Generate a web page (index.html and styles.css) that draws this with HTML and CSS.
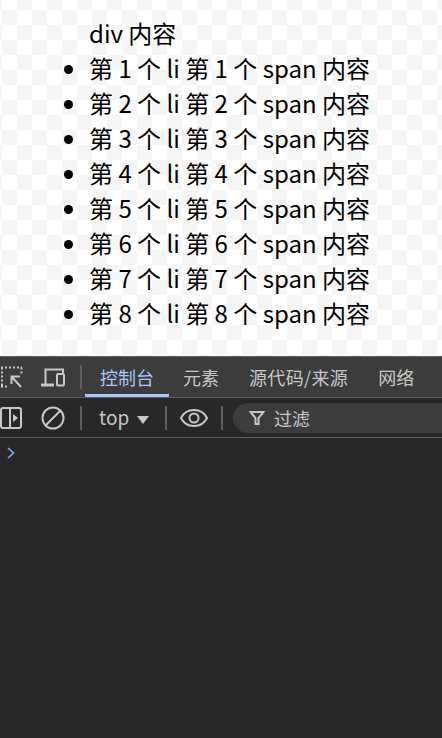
FILE: index.html
```html
<!DOCTYPE html>
<html lang="zh-CN">
<head>
    <meta charset="UTF-8">
    <title>devtools</title>
    <link rel="stylesheet" href="styles.css">
</head>
<body>
    <div class="page">
        <div class="content">
            <div>div 内容</div>
            <ul>
                <li>第 1 个 li 第 1 个 span 内容</li>
                <li>第 2 个 li 第 2 个 span 内容</li>
                <li>第 3 个 li 第 3 个 span 内容</li>
                <li>第 4 个 li 第 4 个 span 内容</li>
                <li>第 5 个 li 第 5 个 span 内容</li>
                <li>第 6 个 li 第 6 个 span 内容</li>
                <li>第 7 个 li 第 7 个 span 内容</li>
                <li>第 8 个 li 第 8 个 span 内容</li>
            </ul>
        </div>
    </div>
    <div class="devtools">
        <div class="tabbar">
            <svg class="icon-inspect" width="24" height="24" viewBox="0 0 24 24" fill="none" stroke="#c7c7c7" stroke-width="2">
                <path d="M1 2.5h21M2 2.5v19M1 21.5h8M21.5 2.5v7" stroke-dasharray="2 2"/>
                <path d="M20 11.5h-8.500v7.500M11.500 11.500L21 22"/>
            </svg>
            <svg class="icon-device" width="24" height="24" viewBox="0 0 24 24" fill="none" stroke="#c7c7c7" stroke-width="2">
                <path d="M4.500 20V4.500H22V8"/>
                <path d="M0 20h13" stroke-width="3"/>
                <rect x="16" y="9" width="7" height="11.500" rx="1"/>
            </svg>
            <span class="divider"></span>
            <div class="tab active">控制台</div>
            <div class="tab first">元素</div>
            <div class="tab wide">源代码/来源</div>
            <div class="tab">网络</div>
        </div>
        <div class="toolbar">
            <svg class="icon-sidebar" width="22" height="22" viewBox="0 0 22 22" fill="none" stroke="#c7c7c7" stroke-width="2">
                <rect x="1" y="1" width="20" height="20" rx="2"/>
                <path d="M10 1v20"/>
                <path d="M13 7l5 4-5 4z" fill="#c7c7c7" stroke="none"/>
            </svg>
            <svg class="icon-clear" width="24" height="24" viewBox="0 0 24 24" fill="none" stroke="#c7c7c7" stroke-width="2">
                <circle cx="12" cy="12" r="10.500"/>
                <path d="M5 19L19 5"/>
            </svg>
            <span class="divider"></span>
            <div class="context"><span class="context-name">top</span><span class="caret"></span></div>
            <span class="divider"></span>
            <svg class="icon-eye" width="28" height="20" viewBox="0 0 28 20" fill="none" stroke="#c7c7c7" stroke-width="2">
                <path d="M1 10C4 4 9 2 14 2s10 2 13 8c-3 6-8 8-13 8S4 16 1 10z"/>
                <circle cx="14" cy="10" r="4.500"/>
            </svg>
            <span class="divider"></span>
            <div class="filter">
                <svg width="16" height="16" viewBox="0 0 16 16" fill="none" stroke="#c7c7c7" stroke-width="2">
                    <path d="M1.500 2h13L9.500 8v6h-3V8z"/>
                </svg>
                <span>过滤</span>
            </div>
        </div>
        <div class="console">
            <svg width="10" height="14" viewBox="0 0 10 14" fill="none" stroke="#7cacf8" stroke-width="1.600">
                <path d="M2 2l5.500 5L2 12"/>
            </svg>
        </div>
    </div>
</body>
</html>
```

FILE: styles.css
```css
* {
    padding: 0;
    margin: 0;
    box-sizing: border-box;
}
html, body {
    height: 100%;
    overflow: hidden;
}
body {
    display: flex;
    flex-direction: column;
    font-family: "Noto Sans CJK SC", sans-serif;
}
.page {
    height: 356px;
    flex: none;
    background-color: #fff;
    background-image: conic-gradient(#f5f5f5 25%, #fff 25% 50%, #f5f5f5 50% 75%, #fff 75%);
    background-size: 30px 30px;
    background-position: 2px -5px;
}
.content {
    padding: 15px 0 0 89px;
    font-size: 24px;
    color: #000;
}
.content ul {
    list-style-type: disc;
}
.devtools {
    flex: 1;
    background-color: #282828;
    border-top: 1px solid #5e5e5e;
    color: #c7c7c7;
    font-size: 18px;
}
.tabbar {
    height: 41px;
    background-color: #3c3c3c;
    border-bottom: 1px solid #5e5e5e;
    display: flex;
    align-items: center;
}
.icon-inspect {
    flex: none;
}
.icon-device {
    margin-left: 17px;
    flex: none;
}
.divider {
    width: 2px;
    height: 24px;
    background-color: #5e5e5e;
    flex: none;
}
.tabbar .divider {
    margin-left: 15px;
}
.tab {
    height: 40px;
    line-height: 40px;
    padding: 0 15px;
    white-space: nowrap;
    flex: none;
}
.tab.active {
    color: #a8c7fa;
    margin-left: 3px;
    box-shadow: inset 0 -3px 0 #a8c7fa;
    border-radius: 0 0 1px 1px;
}
.tab.first {
    padding-left: 14px;
}
.tab.wide {
    letter-spacing: 0.35px;
}
.toolbar {
    height: 40px;
    border-bottom: 1px solid #5e5e5e;
    background-color: #282828;
    display: flex;
    align-items: center;
}
.icon-sidebar {
    flex: none;
}
.icon-clear {
    margin-left: 19px;
    flex: none;
}
.toolbar .divider {
    margin-left: 15px;
}
.context {
    margin-left: 17px;
    width: 51px;
    display: flex;
    align-items: center;
    flex: none;
    font-size: 19px;
}
.context-name {
    margin-top: -2px;
}
.caret {
    margin-left: 8px;
    margin-top: 4px;
    border-left: 6px solid transparent;
    border-right: 6px solid transparent;
    border-top: 8px solid #c7c7c7;
}
.icon-eye {
    margin-left: 13px;
    flex: none;
}
.icon-eye + .divider {
    margin-left: 13px;
}
.filter {
    margin-left: 10px;
    flex: 1;
    height: 30px;
    background-color: #3c3c3c;
    border-radius: 15px 0 0 15px;
    display: flex;
    align-items: center;
    gap: 9px;
    padding-left: 16px;
}
.console {
    padding: 8px 0 0 6px;
    line-height: 0;
}
```
